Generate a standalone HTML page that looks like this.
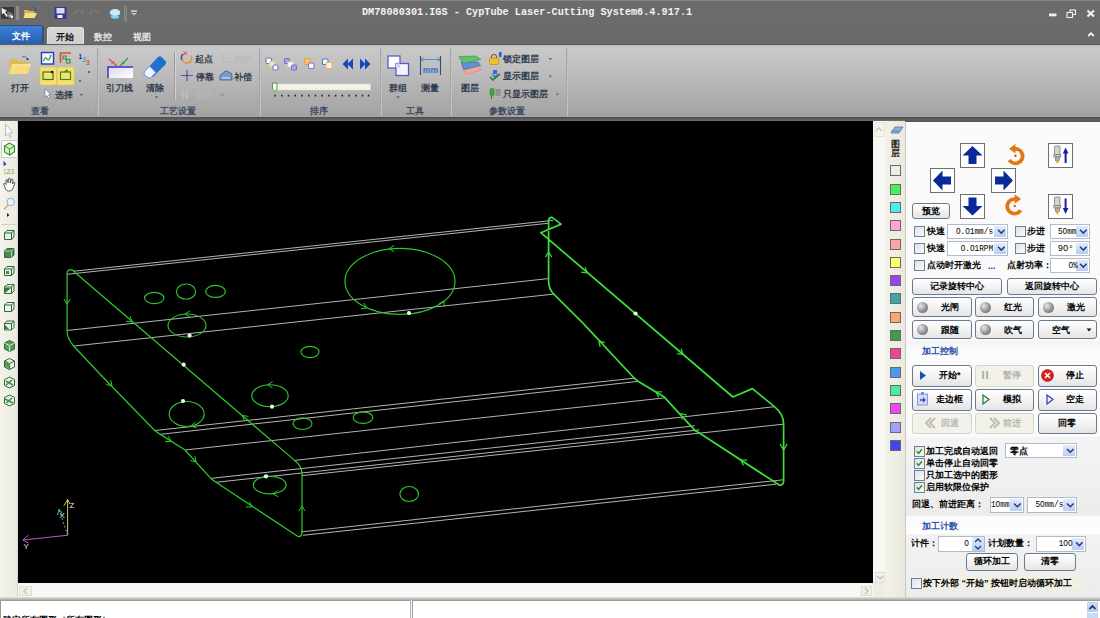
<!DOCTYPE html>
<html><head><meta charset="utf-8">
<style>
*{margin:0;padding:0;box-sizing:border-box}
html,body{width:1100px;height:618px;overflow:hidden;background:#fff;font-family:"Liberation Sans",sans-serif;font-size:9.5px;line-height:1;color:#000}
.abs{position:absolute}
.t{position:absolute;white-space:nowrap;font-size:9.1px;line-height:1;font-weight:bold}
.m{font-family:"Liberation Mono",monospace}
#title{left:0;top:0;width:1100px;height:26px;background:#6b6b6b;border-top:1px solid #858585}
#tabs{left:0;top:26px;width:1100px;height:19px;background:#6a6a6a}
#ribbon{left:0;top:44px;width:1100px;height:74px;background:linear-gradient(#bdbdbd 0,#c9c9c9 3px,#bcbcbc 40%,#acacac 75%,#a2a2a2 100%);border-top:1px solid #5e5e5e}
#rbline{left:0;top:117px;width:1100px;height:4px;background:linear-gradient(#4e4e4e,#5a5a5a 50%,#707070)}
.sep{position:absolute;top:48px;width:2px;height:68px;background:linear-gradient(90deg,#989898,#d0d0d0)}
.rl{color:#2f3b4c}
.gl{color:#3a4a60}
#lefttb{left:0;top:121px;width:18px;height:476px;background:linear-gradient(90deg,#f4f3ec,#ecebe0);border-right:1px solid #d8d7cc}
#canvas{left:18px;top:121px;width:855px;height:462px;background:#000}
#vscroll{left:873px;top:121px;width:12px;height:462px;background:#f7f7f3}
#palette{left:885px;top:121px;width:20px;height:476px;background:linear-gradient(90deg,#f2f1ea,#ebe9dc)}
#panel{left:905px;top:121px;width:195px;height:476px;background:#fafafa;border-left:1px solid #c8c8c8}
#hscroll{left:18px;top:583px;width:867px;height:14px;background:#f7f7f3}
#bottom{left:0;top:597px;width:1100px;height:21px;background:#f4f3ee}
.sw{position:absolute;left:890px;width:11px;height:11px;border:1px solid #6a6a6a}
.btn{position:absolute;border:1px solid #6a7b90;border-radius:3px;background:linear-gradient(#ffffff,#f3f3f3 50%,#e4e4e4)}
.btn.dis{border-color:#d4d4cc;background:#f2f1ea}
.cb{position:absolute;width:11px;height:11px;border:1px solid #6a7f98;background:linear-gradient(135deg,#dde1e6,#fbfbfb)}
.combo{position:absolute;border:1px solid #b0bccb;background:#fff}
.dd{position:absolute;right:1px;top:1px;bottom:1px;width:12px;background:linear-gradient(#e2ebfb,#b9cdf3)}
.ball{position:absolute;width:11px;height:11px;border-radius:50%;background:radial-gradient(circle at 35% 35%,#e8e8e8,#8a8a8a 60%,#5a5a5a)}
.arbox{position:absolute;width:25px;height:25px;border:1px solid #6e6e6e;background:#fff}
.hdr{color:#2a54b0}
</style></head><body>
<!-- TITLE BAR -->
<div id="title" class="abs"></div>
<svg class="abs" style="left:0;top:0" width="145" height="26" viewBox="0 0 145 26">
 <!-- app icon -->
 <rect x="1" y="7" width="13" height="12" fill="#3a3a3a"/>
 <path d="M1.5,8 L7,10.5 L5,12 L8,16 L6.5,17 L3.8,13 L2,14.5 Z" fill="#eeeeee"/>
 <path d="M7,12 Q10,11 13,14 L13,18 L8,18 Z" fill="#777"/>
 <path d="M9,15 L13.5,16 L12,19 Z" fill="#fff"/>
 <!-- separator -->
 <rect x="16.5" y="6" width="2" height="14" rx="1" fill="#888" stroke="#9a9a9a" stroke-width="0.6"/>
 <!-- folder -->
 <path d="M24,10 L28,10 L29,11 L34,11 L34,17.5 L24.5,17.5 Z" fill="#d6b64a"/>
 <path d="M25.5,13 L37,13 L34.5,18 L23.5,18 Z" fill="#f4e07a"/>
 <path d="M31,8.5 Q33,6.5 35,8" fill="none" stroke="#4a5aa8" stroke-width="1.2"/>
 <circle cx="35.5" cy="9.5" r="1" fill="#3a3a8a"/>
 <!-- save -->
 <rect x="54.5" y="7" width="12" height="12" fill="#3a3a92"/>
 <rect x="56.5" y="8" width="8" height="5.5" fill="#d8dcf4"/>
 <rect x="57.5" y="15" width="5" height="3" fill="#f0f0f0"/>
 <!-- undo redo faint -->
 <path d="M74,14 Q77,9 82,12 L83,15" fill="none" stroke="#7e7e7e" stroke-width="1.4"/>
 <path d="M99,14 Q96,9 91,12 L90,15" fill="none" stroke="#7c7c7c" stroke-width="1.4"/>
 <!-- blue disc -->
 <ellipse cx="115" cy="15.5" rx="5.5" ry="3.2" fill="#2a8ad0"/>
 <ellipse cx="115" cy="12.5" rx="5.2" ry="3.6" fill="#cfe8f8"/>
 <ellipse cx="115" cy="17" rx="4" ry="1.5" fill="#7fd8f8"/>
 <!-- separator -->
 <rect x="124.5" y="6" width="2" height="16" rx="1" fill="#7a7a7a" stroke="#959595" stroke-width="0.6"/>
 <!-- customize -->
 <rect x="131" y="10.5" width="6" height="1.2" fill="#f4f4f4"/>
 <path d="M131,13 L137,13 L134,16 Z" fill="#f4f4f4"/>
 <path d="M131,13 L137,13 L134,16 Z" fill="#111" transform="translate(0,0.6) scale(1)" opacity="0.35"/>
</svg>
<div class="t m" style="left:362px;top:7.3px;font-size:10.2px;font-weight:bold;color:#f2f2f2;transform:scaleY(1.15);transform-origin:0 0">DM78080301.IGS - CypTube Laser-Cutting System6.4.917.1</div>
<svg class="abs" style="left:1040px;top:0" width="60" height="45" viewBox="0 0 60 45">
 <rect x="9" y="13.5" width="7.5" height="2.8" fill="#f0f0f0"/>
 <rect x="30" y="10" width="5.5" height="4.5" fill="none" stroke="#f0f0f0" stroke-width="1.1"/>
 <rect x="27" y="12.5" width="5.5" height="5" fill="#6b6b6b" stroke="#f0f0f0" stroke-width="1.1"/>
 <path d="M47.5,10.5 L54,16.5 M54,10.5 L47.5,16.5" stroke="#f4f4f4" stroke-width="2"/>
</svg>

<div id="tabs" class="abs"></div>
<div class="abs" style="left:0;top:25px;width:43px;height:20px;background:linear-gradient(#3f7fd0,#2f6cc0 60%,#2a5fae);border:1px solid #2a4f8a;border-left:none;border-radius:0 2px 2px 0;box-shadow:1px 1px 0 #505050"></div>
<div class="t" style="left:12px;top:32px;color:#fff">文件</div>
<div class="abs" style="left:47px;top:27px;width:37px;height:19px;background:linear-gradient(#d8d8d8,#cfcfcf);border:1px solid #e6e6e6;border-bottom:none;border-radius:3px 3px 0 0"></div>
<div class="t" style="left:55.5px;top:33px;color:#111">开始</div>
<div class="t" style="left:94px;top:33px;color:#e2e2e2">数控</div>
<div class="t" style="left:133px;top:33px;color:#e2e2e2">视图</div>
<svg class="abs" style="left:1080px;top:26px" width="20" height="18"><path d="M8.2,10 L11,7.2 L13.8,10" fill="none" stroke="#f4f4f4" stroke-width="1.8"/></svg>

<div id="ribbon" class="abs"></div>
<div id="rbline" class="abs"></div>
<div class="sep" style="left:97px"></div>
<div class="sep" style="left:259px"></div>
<div class="sep" style="left:380px"></div>
<div class="sep" style="left:450px"></div>
<div class="sep" style="left:566px"></div>
<div class="abs" style="left:174px;top:52px;width:1px;height:48px;background:#9a9a9a;box-shadow:1px 0 0 #d4d4d4"></div>
<svg class="abs" style="left:0;top:44px" width="580" height="74" viewBox="0 44 580 74">
 <!-- 打开 folder -->
 <path d="M9,60 L16,59 L18,61.5 L28,61.5 L28,73 L10,73 Z" fill="#e0b850"/>
 <path d="M12,64.5 L31,64.5 L27.5,74 L8.5,74 Z" fill="#f8dc7c"/>
 <path d="M12,64.5 L31,64.5 L30.5,65.5 L11.6,65.5 Z" fill="#fff0b8"/>
 <path d="M22,57 Q24.5,55.5 26.5,57.5" fill="none" stroke="#606c9a" stroke-width="1"/>
 <circle cx="27.5" cy="59" r="1.1" fill="#2a2a5a"/>
 <!-- wave icon -->
 <rect x="41.5" y="52.5" width="12" height="11.5" fill="#f4f4ff" stroke="#2a3ab0" stroke-width="1.4"/>
 <path d="M43.5,61 Q45,56 47,59 Q49,62 51,55" fill="none" stroke="#30a040" stroke-width="1.3"/>
 <!-- red/green icon -->
 <path d="M60.5,63 L60.5,53 L71,53" fill="none" stroke="#e04838" stroke-width="1.6"/>
 <rect x="63" y="56" width="3" height="3" fill="none" stroke="#409040" stroke-width="1.1"/>
 <rect x="66.5" y="59.5" width="3.5" height="3.5" fill="none" stroke="#409040" stroke-width="1.1"/>
 <!-- 123 -->
 <text x="78.5" y="58.5" font-size="6.3" font-weight="bold" fill="#1a1a80" font-family="Liberation Sans">1</text>
 <text x="82.5" y="61.5" font-size="6.3" font-weight="bold" fill="#40a0c0" font-family="Liberation Sans">2</text>
 <text x="86.3" y="65" font-size="6.3" font-weight="bold" fill="#e05030" font-family="Liberation Sans">3</text>
 <!-- yellow buttons -->
 <rect x="40" y="67" width="16.5" height="18" rx="1.5" fill="#f8e070" stroke="#e8c850" stroke-width="0.8"/>
 <rect x="57.5" y="67" width="16.5" height="18" rx="1.5" fill="#f8e070" stroke="#e8c850" stroke-width="0.8"/>
 <rect x="43" y="72" width="10" height="7.5" fill="none" stroke="#2f7a2a" stroke-width="1.2"/>
 <circle cx="52" cy="72" r="1.3" fill="#10107a"/>
 <rect x="60.5" y="72" width="10" height="7.5" fill="none" stroke="#2f8a2a" stroke-width="1.2"/>
 <path d="M64,72 Q66,69.5 68,71 L66.5,69.5 M68,71 L66,72" fill="none" stroke="#2f8a2a" stroke-width="1"/>
 <!-- dotted line -->
 <path d="M80,81 L89,72" stroke="#e0a070" stroke-width="1" stroke-dasharray="1.5,1"/>
 <circle cx="80" cy="81" r="1" fill="#306030"/><circle cx="89" cy="72" r="1" fill="#306030"/>
 <!-- cursor -->
 <path d="M45,89 L45,97 L47,95.5 L48.5,98.5 L50,97.5 L48.5,94.8 L51,94.5 Z" fill="#fff" stroke="#5a6a80" stroke-width="0.6"/>
 <path d="M79.6,94 L83,94 L81.3,96.2 Z" fill="#6a6a6a"/>
 <path d="M87,107 L92,107 L92,112" fill="none" stroke="#b8b8b8" stroke-width="0.8"/>
 <!-- 引刀线 -->
 <rect x="108" y="67" width="25" height="11" fill="url(#g1)"/>
 <path d="M108,78 L108,67 L133,67" fill="none" stroke="#4030c8" stroke-width="1.5"/>
 <path d="M109,59 L117,66" stroke="#d85030" stroke-width="1.1"/>
 <path d="M111.5,63.5 L114.5,61.5" stroke="#d85030" stroke-width="1"/>
 <path d="M120,66 L128,58" stroke="#30a030" stroke-width="1.2"/>
 <path d="M122,61.5 L124.5,64" stroke="#30a030" stroke-width="1"/>
 <defs>
  <linearGradient id="g1" x1="0" y1="0" x2="1" y2="1"><stop offset="0" stop-color="#d8d8f8"/><stop offset="1" stop-color="#ffffff"/></linearGradient>
 </defs>
 <!-- 清除 eraser -->
 <path d="M146,70 L158,57 Q160,55.5 162,57.5 L165.5,61 Q167,63 165,65 L153,77 Z" fill="#2070d0"/>
 <path d="M144.5,71.5 L149.5,66 L156,72.5 L151,77.5 Q149,79 147,77 L144.5,74.5 Q143.5,73 144.5,71.5 Z" fill="#f0f4ff" stroke="#4a7ac8" stroke-width="0.8"/>
 <path d="M154.6,96.3 L158.4,96.3 L156.5,98.6 Z" fill="#6a6a6a"/>
 <!-- 起点 -->
 <path d="M184,54 A5,5 0 1 0 191,55.5" fill="none" stroke="#e89030" stroke-width="1.4"/>
 <path d="M183,54 A5,5 0 0 0 182,60" fill="none" stroke="#3050c0" stroke-width="1.4"/>
 <path d="M183.5,51.5 L187,55 M187,51.5 L183.5,55" stroke="#e03030" stroke-width="0.9"/>
 <!-- 内外 disabled -->
 <path d="M223,53 L223,62 L232,62 M225,55 L230,55 M225,58 L230,58" stroke="#bababa" stroke-width="1.1" fill="none"/>
 <!-- 停靠 -->
 <path d="M187,70 L187,81 M181,75.5 L193,75.5" stroke="#4858c8" stroke-width="1.2"/>
 <circle cx="187" cy="75.5" r="1.3" fill="#e03030"/>
 <!-- 补偿 -->
 <path d="M220,80 Q219,74 223,73.5 Q225,69.5 228.5,72 Q232,72 232,76 L232,80 Z" fill="#7a9ac8" stroke="#3a5a98" stroke-width="0.8"/>
 <path d="M222,78 L230,78" stroke="#fff" stroke-width="0.8"/>
 <!-- 反向 disabled -->
 <path d="M183,92 L183,99 M181.5,93.5 L183,91.5 L184.5,93.5 M187,91 L187,98 M185.5,96.5 L187,98.5 L188.5,96.5" stroke="#c4c4c4" stroke-width="1" fill="none"/>
 <path d="M220.6,94 L224,94 L222.3,96.2 Z" fill="#8a8a8a"/>
 <!-- 排序 icons -->
 <g stroke-width="1.1">
  <rect x="266" y="58" width="5.5" height="5.5" rx="1.5" fill="#fff" stroke="#8070c8"/>
  <rect x="269.5" y="61.5" width="5.5" height="5.5" rx="1" fill="#f8e0b0" stroke="#f0c890"/>
  <rect x="273" y="65" width="5" height="5" rx="1.5" fill="#fff" stroke="#8070c8"/>
  <rect x="284.5" y="58.5" width="5" height="5" rx="1" fill="#b0a0f0" stroke="#8070c8"/>
  <rect x="288" y="62" width="5" height="5" rx="1" fill="#fff" stroke="#f0d8b0"/>
  <rect x="291.5" y="65" width="5" height="5" rx="1" fill="#b0a0f0" stroke="#8070c8"/>
  <rect x="304.5" y="58.5" width="6" height="6" rx="1" fill="#f8c070" stroke="#f0a040"/>
  <rect x="308.5" y="63" width="5.5" height="5.5" rx="1.5" fill="#fff" stroke="#8070c8"/>
  <rect x="322.5" y="59" width="5.5" height="5.5" rx="1" fill="#fff" stroke="#3a80c8"/>
  <rect x="326" y="62.5" width="6" height="6" rx="1" fill="#fff0e0" stroke="#f0b070"/>
 </g>
 <path d="M348,58.5 L342.5,64 L348,69.5 Z M353,58.5 L347.5,64 L353,69.5 Z" fill="#1848c0"/>
 <path d="M360,58.5 L365.5,64 L360,69.5 Z M365,58.5 L370.5,64 L365,69.5 Z" fill="#1848c0"/>
 <!-- slider -->
 <rect x="272.5" y="84" width="98" height="6" fill="#f4f2e8" stroke="#dcdacc" stroke-width="0.6"/>
 <path d="M272.5,83 L277,83 L277,89 L274.75,91.5 L272.5,89 Z" fill="#f8f8f8" stroke="#409840" stroke-width="0.9"/>
 <g fill="#222" transform="translate(0,-0.3)">
  <rect x="274.3" y="95" width="1.5" height="1.8"/><rect x="281.1" y="95" width="1.5" height="1.8"/><rect x="287.7" y="95" width="1.5" height="1.8"/><rect x="294.5" y="95" width="1.5" height="1.8"/><rect x="301.2" y="95" width="1.5" height="1.8"/><rect x="308.0" y="95" width="1.5" height="1.8"/><rect x="314.7" y="95" width="1.5" height="1.8"/><rect x="321.4" y="95" width="1.5" height="1.8"/><rect x="328.2" y="95" width="1.5" height="1.8"/><rect x="334.9" y="95" width="1.5" height="1.8"/><rect x="341.6" y="95" width="1.5" height="1.8"/><rect x="348.4" y="95" width="1.5" height="1.8"/><rect x="355.1" y="95" width="1.5" height="1.8"/><rect x="361.8" y="95" width="1.5" height="1.8"/><rect x="367.8" y="95" width="1.5" height="1.8"/>
 </g>
 <!-- 群组 -->
 <rect x="388" y="56" width="12" height="12" fill="#fff" stroke="#5a5ad0" stroke-width="1.3"/>
 <rect x="396" y="63.5" width="12.5" height="12" fill="#f4f4ff" stroke="#5a5ad0" stroke-width="1.3"/>
 <rect x="396" y="63.5" width="4" height="4.5" fill="#d8d0f8"/>
 <path d="M396.2,96.3 L400,96.3 L398.1,98.6 Z" fill="#6a6a6a"/>
 <!-- 测量 -->
 <path d="M420.5,56 L420.5,75 M440.5,56 L440.5,75" stroke="#404a60" stroke-width="1.1"/>
 <path d="M421,59.5 L440,59.5 M423.5,57.5 L421,59.5 L423.5,61.5 M437.5,57.5 L440,59.5 L437.5,61.5" fill="none" stroke="#3a8ad0" stroke-width="0.9"/>
 <text x="422.8" y="72.5" font-size="8.6" font-weight="bold" fill="#2a72c8" font-family="Liberation Sans">mm</text>
 <!-- 图层 icon -->
 <path d="M462,66.5 L478,66.5 L481.5,70 L465.5,74.5 Z" fill="#f0a890" stroke="#e08070" stroke-width="0.6"/>
 <path d="M461,62 L478,62 L480.5,65.5 L464,69.5 Z" fill="#6090d8" stroke="#3060b0" stroke-width="0.6"/>
 <path d="M459,56.5 L476,56 L481,59.5 L463,63.5 Z" fill="#60c070" stroke="#309040" stroke-width="0.6"/>
 <!-- lock -->
 <path d="M491.5,58 L491.5,56 Q494,52.5 496.5,56 L496.5,58" fill="none" stroke="#806020" stroke-width="1.1"/>
 <rect x="489.5" y="58" width="9" height="6.5" rx="1" fill="#f0c030" stroke="#b08010" stroke-width="0.6"/>
 <rect x="499" y="52" width="2.5" height="5" fill="#2a5ad0"/>
 <path d="M548.6,58 L552,58 L550.3,60.2 Z" fill="#6a6a6a"/>
 <!-- show layer -->
 <rect x="493" y="70" width="4" height="4" fill="#3a6ad8"/>
 <path d="M491,73 L495,76 L499,73 L495,79 Z" fill="#3a6ad8"/>
 <path d="M490,77 L493,80 L500,74" fill="none" stroke="#208030" stroke-width="1.6"/>
 <path d="M548.6,75.5 L552,75.5 L550.3,77.7 Z" fill="#6a6a6a"/>
 <!-- only show -->
 <rect x="489.5" y="88" width="5" height="8" rx="2" fill="#40a040"/>
 <rect x="495.5" y="89" width="5" height="7" fill="#909090"/>
 <path d="M491.5,96 L491.5,99" stroke="#406040" stroke-width="1"/>
 <path d="M555.6,93.5 L559,93.5 L557.3,95.7 Z" fill="#6a6a6a"/>
</svg>
<div class="t rl" style="left:10.5px;top:84px">打开</div>
<div class="t rl" style="left:55px;top:91px">选择</div>
<div class="t gl" style="left:31px;top:107px">查看</div>
<div class="t rl" style="left:106px;top:84px">引刀线</div>
<div class="t rl" style="left:146px;top:84px">清除</div>
<div class="t rl" style="left:195px;top:55px">起点</div>
<div class="t" style="left:235px;top:55px;color:#b9b9b9">内外</div>
<div class="t rl" style="left:196px;top:73px">停靠</div>
<div class="t rl" style="left:234px;top:73px">补偿</div>
<div class="t" style="left:196px;top:91px;color:#b6b6b6">反向</div>
<div class="t gl" style="left:160px;top:107px">工艺设置</div>
<div class="t gl" style="left:310px;top:107px">排序</div>
<div class="t rl" style="left:389px;top:84px">群组</div>
<div class="t rl" style="left:421px;top:84px">测量</div>
<div class="t gl" style="left:406px;top:107px">工具</div>
<div class="t rl" style="left:461px;top:84px">图层</div>
<div class="t rl" style="left:503px;top:55px">锁定图层</div>
<div class="t rl" style="left:503px;top:72px">显示图层</div>
<div class="t rl" style="left:503px;top:90px">只显示图层</div>
<div class="t gl" style="left:489px;top:107px">参数设置</div>

<!-- MAIN -->
<div id="lefttb" class="abs"></div>
<div class="abs" style="left:0.5px;top:140px;width:17px;height:17.5px;background:#fdfdfc;border:1px solid #c4cad4;border-radius:1px"></div>
<svg class="abs" style="left:0;top:121px" width="18" height="290" viewBox="0 121 18 290">
 <!-- cursor -->
 <path d="M5.5,124 L5.5,136 L8,133.5 L10,137.5 L11.5,136.8 L9.5,132.8 L13,132.5 Z" fill="#fafafa" stroke="#a8aeb8" stroke-width="0.8"/>
 <!-- cube green -->
 <path d="M9.5,143 L14.5,146 L14.5,152 L9.5,155 L4.5,152 L4.5,146 Z" fill="#d8f0c8" stroke="#3a9a30" stroke-width="1.2"/>
 <path d="M4.5,146 L9.5,149 L14.5,146 M9.5,149 L9.5,155" fill="none" stroke="#3a9a30" stroke-width="1"/>
 <!-- 123 -->
 <path d="M3.5,160.5 L3.5,166 L6.5,164.5 Z" fill="#3a3aa0"/>
 <text x="3" y="173.5" font-size="6.8" fill="#d0a040" font-family="Liberation Sans">1</text>
 <text x="6.6" y="173.5" font-size="6.8" fill="#50a050" font-family="Liberation Sans">2</text>
 <text x="10.4" y="173.5" font-size="6.8" fill="#80b050" font-family="Liberation Sans">3</text>
 <!-- hand -->
 <path d="M4.5,186 Q3,183.5 4.5,183 L6,184.5 L6,180 Q6.8,179 7.6,180 L8,183 L8.5,178.5 Q9.4,177.6 10.2,178.5 L10.4,183 L11.3,179.3 Q12.2,178.6 12.9,179.6 L12.6,184 L13.8,182.2 Q15.2,182 14.8,183.6 L12.6,189 Q11.8,191 9.8,191 L8.5,191 Q6.5,191 5.5,189 Z" fill="#fbfbfb" stroke="#383838" stroke-width="0.8"/>
 <!-- magnifier -->
 <circle cx="10.8" cy="202" r="3.8" fill="#e4f0fa" stroke="#90b0d0" stroke-width="1"/>
 <path d="M8,205 L4,209.5" stroke="#e0b070" stroke-width="1.8"/>
 <path d="M7,213 L7,217 L9.5,215 Z" fill="#222"/>
 <rect x="1" y="224" width="16" height="1" fill="#cfcfc4"/>
 <!-- cube views -->
 <g stroke="#2f6a38" stroke-width="1">
  <path d="M4.5,233 L7,230.5 L14,230.5 L14,237 L11.5,239.5 L4.5,239.5 Z" fill="#e8f2e4"/><path d="M4.5,233 L11.5,233 L14,230.5 M11.5,233 L11.5,239.5" fill="none"/>
  <path d="M4.5,251 L7,248.5 L14,248.5 L14,255 L11.5,257.5 L4.5,257.5 Z" fill="#4a8a50"/><path d="M4.5,251 L11.5,251 L14,248.5 M11.5,251 L11.5,257.5" fill="none" stroke="#a8d0a8"/>
  <path d="M4.5,269 L7,266.5 L14,266.5 L14,273 L11.5,275.5 L4.5,275.5 Z" fill="#e8f2e4"/><path d="M4.5,269 L11.5,269 L14,266.5 M11.5,269 L11.5,275.5" fill="none"/><rect x="6" y="271" width="3" height="3" fill="#4a8a50" stroke="none"/>
  <path d="M4.5,287 L7,284.5 L14,284.5 L14,291 L11.5,293.5 L4.5,293.5 Z" fill="#e8f2e4"/><path d="M4.5,287 L11.5,287 L14,284.5 M11.5,287 L11.5,293.5" fill="none"/><path d="M5,293 L5,288 L11,288 Z" fill="#3a7a40" stroke="none"/>
  <path d="M4.5,305 L7,302.5 L14,302.5 L14,309 L11.5,311.5 L4.5,311.5 Z" fill="#f0f6ee"/><path d="M4.5,305 L11.5,305 L14,302.5 M11.5,305 L11.5,311.5" fill="none"/>
  <path d="M4.5,323.5 L7,321 L14,321 L14,327.5 L11.5,330 L4.5,330 Z" fill="#e8f2e4"/><path d="M4.5,323.5 L11.5,323.5 L14,321 M11.5,323.5 L11.5,330" fill="none"/><path d="M5,329 L5,325 L9,329 Z" fill="#3a7a40" stroke="none"/>
  <path d="M9.5,340.5 L14.5,343 L14.5,349 L9.5,351.5 L4.5,349 L4.5,343 Z" fill="#5a9a58"/><path d="M4.5,343 L9.5,345.5 L14.5,343 M9.5,345.5 L9.5,351.5" fill="none" stroke="#d8ecd8"/>
  <path d="M9.5,358.5 L14.5,361 L14.5,367 L9.5,369.5 L4.5,367 L4.5,361 Z" fill="#e8f2e4"/><path d="M4.5,361 L9.5,363.5 L14.5,361 M9.5,363.5 L9.5,369.5" fill="none"/><path d="M5,361.5 L9.5,364 L9.5,369 L5,366.5 Z" fill="#5a9a58" stroke="none"/>
  <path d="M9.5,377 L14.5,379.5 L14.5,385.5 L9.5,388 L4.5,385.5 L4.5,379.5 Z" fill="#e8f2e4"/><path d="M6,381 L13,385 M6,385 L12,380" fill="none" stroke="#4a8a50" stroke-width="1.6"/>
  <path d="M9.5,395 L14.5,397.5 L14.5,403.5 L9.5,406 L4.5,403.5 L4.5,397.5 Z" fill="#e8f2e4"/><path d="M6.5,403 L12,398 M5,399 L13,403" fill="none" stroke="#4a8a50" stroke-width="1.6"/>
 </g>
</svg>

<div id="canvas" class="abs" style="overflow:hidden"><div class="abs" style="left:-18px;top:-121px"><svg class="abs" style="left:0;top:0" width="1100" height="618" viewBox="0 0 1100 618"><g><line x1="73.0" y1="271.3" x2="553.0" y2="220.4" stroke="#b4b4b4" stroke-width="1"/>
<line x1="67.0" y1="274.3" x2="549.0" y2="223.2" stroke="#b4b4b4" stroke-width="1"/>
<line x1="67.0" y1="330.5" x2="548.4" y2="278.6" stroke="#b4b4b4" stroke-width="1"/>
<line x1="74.0" y1="346.0" x2="553.8" y2="294.1" stroke="#b4b4b4" stroke-width="1"/>
<line x1="155.2" y1="430.5" x2="634.0" y2="378.2" stroke="#b4b4b4" stroke-width="1"/>
<line x1="159.7" y1="434.4" x2="638.0" y2="381.4" stroke="#b4b4b4" stroke-width="1"/>
<line x1="185.0" y1="450.0" x2="663.8" y2="398.0" stroke="#b4b4b4" stroke-width="1"/>
<line x1="294.6" y1="460.4" x2="774.4" y2="406.7" stroke="#b4b4b4" stroke-width="1"/>
<line x1="210.8" y1="478.4" x2="694.9" y2="425.8" stroke="#b4b4b4" stroke-width="1"/>
<line x1="216.0" y1="482.3" x2="699.4" y2="429.8" stroke="#b4b4b4" stroke-width="1"/>
<line x1="302.0" y1="475.6" x2="783.4" y2="424.2" stroke="#b4b4b4" stroke-width="1"/>
<line x1="301.0" y1="531.9" x2="783.0" y2="479.8" stroke="#b4b4b4" stroke-width="1"/>
<line x1="303.0" y1="535.3" x2="776.0" y2="484.2" stroke="#b4b4b4" stroke-width="1"/>
<path d="M75,272.5 L294.6,460.4 Q302,466 302,474 L302,533.5 Q301,537 298,536.5 L216,482.3 L210.8,478.4 L185,450 L160.4,434.4 L155.2,431 L100.6,374.7 L73.6,346 Q67.1,338 67.1,332 L67.1,273 Q67.5,269.6 70.5,269.6 Q73.5,269.6 75,272.5" fill="none" stroke="#2cc82c" stroke-width="1.25" stroke-linejoin="round"/>
<path d="M548.6,281 L548.6,220 Q549.5,217.2 552,217.4 L561.1,224.1 L540.8,232.7 L732.9,397 L752.4,388.6 L774.4,406.7 Q783.4,414 783.6,423.5 L783.6,481.7 Q783,485.5 779.6,485.3 L699.4,433 L694.9,430.4 L663.8,396.7 L638,381.2 L634.1,378 L583.9,324.2 L553.8,294.1 Q548.6,289 548.6,281" fill="none" stroke="#3ce03c" stroke-width="1.7" stroke-linejoin="round"/>
<ellipse cx="154.3" cy="298" rx="9.7" ry="5.7" fill="none" stroke="#2ec42e" stroke-width="1.15"/>
<ellipse cx="186" cy="291.6" rx="9.6" ry="7.6" fill="none" stroke="#2ec42e" stroke-width="1.15"/>
<ellipse cx="215.5" cy="291.4" rx="9.8" ry="6" fill="none" stroke="#2ec42e" stroke-width="1.15"/>
<ellipse cx="187" cy="325.5" rx="19" ry="11.5" fill="none" stroke="#2ec42e" stroke-width="1.15"/>
<ellipse cx="400" cy="281.4" rx="55" ry="33" fill="none" stroke="#2ec42e" stroke-width="1.15"/>
<ellipse cx="310" cy="352" rx="9" ry="5.6" fill="none" stroke="#2ec42e" stroke-width="1.15"/>
<ellipse cx="270" cy="395.7" rx="18.2" ry="11" fill="none" stroke="#2ec42e" stroke-width="1.15"/>
<ellipse cx="186.7" cy="414" rx="17.5" ry="12.5" fill="none" stroke="#2ec42e" stroke-width="1.15"/>
<ellipse cx="302.5" cy="423.7" rx="9.5" ry="5.8" fill="none" stroke="#2ec42e" stroke-width="1.15"/>
<ellipse cx="363" cy="417.6" rx="9.8" ry="5.8" fill="none" stroke="#2ec42e" stroke-width="1.15"/>
<ellipse cx="269.7" cy="485" rx="16.4" ry="8.9" fill="none" stroke="#2ec42e" stroke-width="1.15"/>
<ellipse cx="409.2" cy="494" rx="9.3" ry="7.5" fill="none" stroke="#2ec42e" stroke-width="1.15"/>
<circle cx="409" cy="313" r="2.1" fill="#f2f2f2"/>
<circle cx="189.6" cy="335.6" r="2.1" fill="#f2f2f2"/>
<circle cx="183.7" cy="364.7" r="2.1" fill="#f2f2f2"/>
<circle cx="272" cy="406.7" r="2.1" fill="#f2f2f2"/>
<circle cx="183" cy="401" r="2.1" fill="#f2f2f2"/>
<circle cx="266" cy="476.3" r="2.1" fill="#f2f2f2"/>
<circle cx="635.5" cy="313.5" r="2.1" fill="#f2f2f2"/>
<line x1="67.1" y1="304" x2="70.3" y2="298.9" stroke="#2cc82c" stroke-width="1"/>
<line x1="67.1" y1="304" x2="63.9" y2="298.9" stroke="#2cc82c" stroke-width="1"/>
<line x1="302" y1="506" x2="298.8" y2="511.1" stroke="#2cc82c" stroke-width="1"/>
<line x1="302" y1="506" x2="305.2" y2="511.1" stroke="#2cc82c" stroke-width="1"/>
<line x1="132" y1="322" x2="130.2" y2="316.3" stroke="#2cc82c" stroke-width="1"/>
<line x1="132" y1="322" x2="126.1" y2="321.1" stroke="#2cc82c" stroke-width="1"/>
<line x1="242.5" y1="415.5" x2="244.3" y2="421.2" stroke="#2cc82c" stroke-width="1"/>
<line x1="242.5" y1="415.5" x2="248.4" y2="416.4" stroke="#2cc82c" stroke-width="1"/>
<line x1="112" y1="386" x2="110.8" y2="380.1" stroke="#2cc82c" stroke-width="1"/>
<line x1="112" y1="386" x2="106.2" y2="384.5" stroke="#2cc82c" stroke-width="1"/>
<line x1="171" y1="441.5" x2="168.4" y2="436.1" stroke="#2cc82c" stroke-width="1"/>
<line x1="171" y1="441.5" x2="165.0" y2="441.5" stroke="#2cc82c" stroke-width="1"/>
<line x1="196" y1="462" x2="194.9" y2="456.1" stroke="#2cc82c" stroke-width="1"/>
<line x1="196" y1="462" x2="190.2" y2="460.4" stroke="#2cc82c" stroke-width="1"/>
<line x1="252" y1="507" x2="249.4" y2="501.6" stroke="#2cc82c" stroke-width="1"/>
<line x1="252" y1="507" x2="246.0" y2="506.9" stroke="#2cc82c" stroke-width="1"/>
<line x1="548.6" y1="252" x2="545.4" y2="257.1" stroke="#3ce03c" stroke-width="1.2"/>
<line x1="548.6" y1="252" x2="551.8" y2="257.1" stroke="#3ce03c" stroke-width="1.2"/>
<line x1="587" y1="273" x2="585.2" y2="267.3" stroke="#3ce03c" stroke-width="1.2"/>
<line x1="587" y1="273" x2="581.1" y2="272.1" stroke="#3ce03c" stroke-width="1.2"/>
<line x1="683" y1="354.5" x2="681.2" y2="348.8" stroke="#3ce03c" stroke-width="1.2"/>
<line x1="683" y1="354.5" x2="677.1" y2="353.6" stroke="#3ce03c" stroke-width="1.2"/>
<line x1="599" y1="341" x2="600.1" y2="346.9" stroke="#3ce03c" stroke-width="1.2"/>
<line x1="599" y1="341" x2="604.8" y2="342.6" stroke="#3ce03c" stroke-width="1.2"/>
<line x1="656" y1="392" x2="658.7" y2="397.3" stroke="#3ce03c" stroke-width="1.2"/>
<line x1="656" y1="392" x2="662.0" y2="391.9" stroke="#3ce03c" stroke-width="1.2"/>
<line x1="681" y1="413.5" x2="682.1" y2="419.4" stroke="#3ce03c" stroke-width="1.2"/>
<line x1="681" y1="413.5" x2="686.8" y2="415.1" stroke="#3ce03c" stroke-width="1.2"/>
<line x1="741" y1="460" x2="743.5" y2="465.4" stroke="#3ce03c" stroke-width="1.2"/>
<line x1="741" y1="460" x2="747.0" y2="460.1" stroke="#3ce03c" stroke-width="1.2"/>
<line x1="783.6" y1="450" x2="787.1" y2="443.9" stroke="#3ce03c" stroke-width="1.2"/>
<line x1="783.6" y1="450" x2="780.1" y2="443.9" stroke="#3ce03c" stroke-width="1.2"/>
<line x1="185" y1="314" x2="190.1" y2="317.2" stroke="#2cc82c" stroke-width="1"/>
<line x1="185" y1="314" x2="190.1" y2="310.8" stroke="#2cc82c" stroke-width="1"/>
<line x1="389" y1="248.6" x2="394.1" y2="251.8" stroke="#2cc82c" stroke-width="1"/>
<line x1="389" y1="248.6" x2="394.1" y2="245.4" stroke="#2cc82c" stroke-width="1"/>
<line x1="367" y1="308" x2="363.7" y2="303.0" stroke="#2cc82c" stroke-width="1"/>
<line x1="367" y1="308" x2="361.0" y2="308.7" stroke="#2cc82c" stroke-width="1"/>
<line x1="444" y1="301" x2="438.7" y2="303.8" stroke="#2cc82c" stroke-width="1"/>
<line x1="444" y1="301" x2="444.2" y2="307.0" stroke="#2cc82c" stroke-width="1"/>
<line x1="267.5" y1="384.8" x2="272.6" y2="388.0" stroke="#2cc82c" stroke-width="1"/>
<line x1="267.5" y1="384.8" x2="272.6" y2="381.6" stroke="#2cc82c" stroke-width="1"/>
<line x1="191" y1="426" x2="196.6" y2="428.2" stroke="#2cc82c" stroke-width="1"/>
<line x1="191" y1="426" x2="195.5" y2="422.0" stroke="#2cc82c" stroke-width="1"/>
<line x1="273" y1="494" x2="278.3" y2="496.7" stroke="#2cc82c" stroke-width="1"/>
<line x1="273" y1="494" x2="277.8" y2="490.4" stroke="#2cc82c" stroke-width="1"/>
<line x1="67.6" y1="535.2" x2="67.6" y2="499.5" stroke="#d8c860" stroke-width="1"/>
<polyline points="63.9,505.8 67.6,499.5 70,504" fill="none" stroke="#d8c860" stroke-width="1"/>
<line x1="67.6" y1="535.2" x2="59.2" y2="510" stroke="#40b8c8" stroke-width="1" stroke-dasharray="2,2"/>
<polyline points="57.5,515 59.2,509 62,513" fill="none" stroke="#40b8c8" stroke-width="1"/>
<line x1="67.6" y1="535.2" x2="22.9" y2="540" stroke="#c058c0" stroke-width="1.1"/>
<polyline points="28.5,535 22.9,540 28.5,543" fill="none" stroke="#c058c0" stroke-width="1"/>
<text x="69.5" y="508" fill="#e8e8e8" font-size="8" font-family="Liberation Sans">Z</text>
<text x="59.5" y="518" fill="#e0e0e0" font-size="8" font-family="Liberation Sans">X</text>
<text x="23.5" y="549" fill="#e0e0e0" font-size="8" font-family="Liberation Sans">Y</text></g></svg></div></div>
<div id="vscroll" class="abs"></div>
<div id="hscroll" class="abs"></div>
<div class="abs" style="left:873px;top:583px;width:12px;height:14px;background:#eeede4"></div>
<div class="abs" style="left:873.5px;top:122px;width:11px;height:15px;background:#f4f3ec;border:1px solid #e6e5dc"></div>
<div class="abs" style="left:875px;top:572px;width:10px;height:11px;background:#f1f0e8;border:1px solid #e0dfd4"></div>
<div class="abs" style="left:18.5px;top:585.5px;width:13px;height:10.5px;background:#f1f0e8;border:1px solid #e0dfd4"></div>
<div class="abs" style="left:861px;top:586px;width:11px;height:10px;background:#f1f0e8;border:1px solid #e0dfd4"></div>
<svg class="abs" style="left:0;top:0" width="1100" height="618">
 <path d="M876,131 L879,128 L882,131" fill="none" stroke="#c6c6c0" stroke-width="1.3"/>
 <path d="M877,576 L880,579 L883,576" fill="none" stroke="#c0c0b8" stroke-width="1.3"/>
 <path d="M27,588 L24,591 L27,594" fill="none" stroke="#c0c0b8" stroke-width="1.3"/>
 <path d="M865,588 L868,591 L865,594" fill="none" stroke="#c0c0b8" stroke-width="1.3"/>
</svg>

<div id="palette" class="abs"></div>
<svg class="abs" style="left:885px;top:121px" width="20" height="40" viewBox="885 121 20 40"><path d="M891,133 L895,127 L903,127 L899,133 Z" fill="#8ab0e0" stroke="#4a78b8" stroke-width="0.8"/><path d="M891,131 L899,131" stroke="#3a68a8" stroke-width="0.6"/></svg>
<div class="t" style="left:890.5px;top:140px;font-size:8.6px;line-height:8.8px;width:9px;white-space:normal;font-weight:bold;color:#1a1a1a">图层</div>
<div class="sw" style="top:165.3px;background:#ececea"></div>
<div class="sw" style="top:183.6px;background:#4af055"></div>
<div class="sw" style="top:201.9px;background:#48eeee"></div>
<div class="sw" style="top:220.2px;background:#ffa4d4"></div>
<div class="sw" style="top:238.5px;background:#ffa4a4"></div>
<div class="sw" style="top:256.8px;background:#ffff6a"></div>
<div class="sw" style="top:275.1px;background:#9944ee"></div>
<div class="sw" style="top:293.4px;background:#40a4a4"></div>
<div class="sw" style="top:311.7px;background:#ffa474"></div>
<div class="sw" style="top:330.0px;background:#409a48"></div>
<div class="sw" style="top:348.3px;background:#ee4498"></div>
<div class="sw" style="top:366.6px;background:#4898ee"></div>
<div class="sw" style="top:384.9px;background:#48ee9c"></div>
<div class="sw" style="top:403.2px;background:#ee48ee"></div>
<div class="sw" style="top:421.5px;background:#a0a0ff"></div>
<div class="sw" style="top:439.8px;background:#4444ee"></div>
<div id="panel" class="abs"></div>
<div class="abs" style="left:905px;top:120px;width:195px;height:2px;background:#5a5a5a"></div>
<div class="arbox" style="left:960px;top:143px"></div>
<svg class="abs" style="left:960px;top:143px" width="25" height="25"><path d="M12.5,3 L22.5,12.5 L16.5,12.5 L16.5,21 L8.5,21 L8.5,12.5 L2.5,12.5 Z" fill="#0a2a98"/></svg>
<div class="arbox" style="left:930px;top:168px"></div>
<svg class="abs" style="left:930px;top:168px" width="25" height="25"><path d="M3,12.5 L12.5,2.5 L12.5,8.5 L21,8.5 L21,16.5 L12.5,16.5 L12.5,22.5 Z" fill="#0a2a98"/></svg>
<div class="arbox" style="left:991px;top:168px"></div>
<svg class="abs" style="left:991px;top:168px" width="25" height="25"><path d="M22,12.5 L12.5,2.5 L12.5,8.5 L4,8.5 L4,16.5 L12.5,16.5 L12.5,22.5 Z" fill="#0a2a98"/></svg>
<div class="arbox" style="left:960px;top:193.5px"></div>
<svg class="abs" style="left:960px;top:193.5px" width="25" height="25"><path d="M12.5,21.5 L22.5,12 L16.5,12 L16.5,3.5 L8.5,3.5 L8.5,12 L2.5,12 Z" fill="#0a2a98"/></svg>
<svg class="abs" style="left:1004px;top:142px" width="26" height="78" viewBox="0 0 26 78"><path d="M10.8,6.9 A7.2,7.2 0 1 1 5.3,18" fill="none" stroke="#e07818" stroke-width="3.9"/><path d="M5,6.8 L11.5,2 L11.5,11.6 Z" fill="#e07818"/><circle cx="11.4" cy="13.7" r="1.2" fill="#c86010"/><path d="M11.3,57.2 A7.2,7.2 0 1 0 16.6,68.2" fill="none" stroke="#e07818" stroke-width="3.9"/><path d="M17.2,57 L10.7,52.2 L10.7,61.8 Z" fill="#e07818"/><circle cx="10.7" cy="64" r="1.2" fill="#c86010"/></svg>
<div class="arbox" style="left:1048px;top:143px"></div>
<svg class="abs" style="left:1048px;top:143px" width="25" height="25"><rect x="6.5" y="3" width="5.5" height="8.5" rx="0.8" fill="#d4d4d4" stroke="#6a6a6a" stroke-width="0.7"/><rect x="5.8" y="11.5" width="7" height="2.5" fill="#c8c8c8" stroke="#6a6a6a" stroke-width="0.6"/><rect x="7.3" y="14" width="4" height="3.5" fill="#b0b0b0" stroke="#6a6a6a" stroke-width="0.6"/><path d="M7.3,17.5 L11.3,17.5 L9.3,21 Z" fill="#e0b020"/><path d="M17.6,9 L17.6,20" stroke="#1a1aa8" stroke-width="2"/><path d="M14.8,10.5 L17.6,4.5 L20.4,10.5 Z" fill="#1a1aa8"/></svg>
<div class="arbox" style="left:1048px;top:194px"></div>
<svg class="abs" style="left:1048px;top:194px" width="25" height="25"><rect x="6.5" y="3" width="5.5" height="8.5" rx="0.8" fill="#d4d4d4" stroke="#6a6a6a" stroke-width="0.7"/><rect x="5.8" y="11.5" width="7" height="2.5" fill="#c8c8c8" stroke="#6a6a6a" stroke-width="0.6"/><rect x="7.3" y="14" width="4" height="3.5" fill="#b0b0b0" stroke="#6a6a6a" stroke-width="0.6"/><path d="M7.3,17.5 L11.3,17.5 L9.3,21 Z" fill="#e0b020"/><path d="M17.6,4.5 L17.6,15.5" stroke="#1a1aa8" stroke-width="2"/><path d="M14.8,14 L17.6,20 L20.4,14 Z" fill="#1a1aa8"/></svg>
<div class="btn " style="left:912px;top:203px;width:38px;height:15.5px"></div>
<div class="t" style="left:922px;top:206.5px;">预览</div>
<div class="cb" style="left:914px;top:226px"></div>
<div class="t" style="left:926.5px;top:227px;">快速</div>
<div class="combo" style="left:946.5px;top:224px;width:61.5px;height:14.5px"><div class="dd"></div></div>
<svg class="abs" style="left:995px;top:224px" width="13" height="14.5"><path d="M3,5.8 L6.3,9.1 L9.6,5.8" fill="none" stroke="#2a3a78" stroke-width="1.5"/></svg>
<div class="t m" style="right:106.5px;top:226.8px;font-size:9.8px;font-weight:normal;color:#000;transform:scaleX(0.79);transform-origin:100% 0">O.O1mm/s</div>
<div class="cb" style="left:1015px;top:226px"></div>
<div class="t" style="left:1027px;top:227px;">步进</div>
<div class="combo" style="left:1050px;top:224px;width:40px;height:14.5px"><div class="dd"></div></div>
<svg class="abs" style="left:1077px;top:224px" width="13" height="14.5"><path d="M3,5.8 L6.3,9.1 L9.6,5.8" fill="none" stroke="#2a3a78" stroke-width="1.5"/></svg>
<div class="t m" style="right:23.5px;top:226.8px;font-size:9.8px;font-weight:normal;color:#000;transform:scaleX(0.79);transform-origin:100% 0">5Omm</div>
<div class="cb" style="left:914px;top:243px"></div>
<div class="t" style="left:926.5px;top:244px;">快速</div>
<div class="combo" style="left:946.5px;top:241px;width:61.5px;height:14.5px"><div class="dd"></div></div>
<svg class="abs" style="left:995px;top:241px" width="13" height="14.5"><path d="M3,5.8 L6.3,9.1 L9.6,5.8" fill="none" stroke="#2a3a78" stroke-width="1.5"/></svg>
<div class="t m" style="right:106.5px;top:243.8px;font-size:9.8px;font-weight:normal;color:#000;transform:scaleX(0.79);transform-origin:100% 0">O.O1RPM</div>
<div class="cb" style="left:1015px;top:243px"></div>
<div class="t" style="left:1027px;top:244px;">步进</div>
<div class="combo" style="left:1050px;top:241px;width:40px;height:14.5px"><div class="dd"></div></div>
<svg class="abs" style="left:1077px;top:241px" width="13" height="14.5"><path d="M3,5.8 L6.3,9.1 L9.6,5.8" fill="none" stroke="#2a3a78" stroke-width="1.5"/></svg>
<div class="t m" style="right:26.0px;top:243.8px;font-size:9.8px;font-weight:normal;color:#000;transform:scaleX(0.9);transform-origin:100% 0">9O°</div>
<div class="cb" style="left:914px;top:260px"></div>
<div class="t" style="left:926.5px;top:261px;">点动时开激光</div>
<div class="t" style="left:988px;top:262px;color:#1a2aa0;font-weight:bold;font-size:9px;font-family:'Liberation Sans'">...</div>
<div class="t" style="left:1007px;top:261px;">点射功率：</div>
<div class="combo" style="left:1050px;top:258px;width:40px;height:14.5px"><div class="dd"></div></div>
<svg class="abs" style="left:1077px;top:258px" width="13" height="14.5"><path d="M3,5.8 L6.3,9.1 L9.6,5.8" fill="none" stroke="#2a3a78" stroke-width="1.5"/></svg>
<div class="t m" style="right:22.5px;top:260.8px;font-size:9.8px;font-weight:normal;color:#000;transform:scaleX(0.79);transform-origin:100% 0">O%</div>
<div class="btn " style="left:912px;top:278px;width:90px;height:17px"></div>
<div class="t" style="left:930px;top:282px;">记录旋转中心</div>
<div class="btn " style="left:1007px;top:278px;width:90px;height:17px"></div>
<div class="t" style="left:1025px;top:282px;">返回旋转中心</div>
<div class="btn " style="left:912px;top:297px;width:60px;height:20px"></div>
<div class="ball" style="left:917px;top:301.5px"></div>
<div class="t" style="left:941px;top:303px;">光闸</div>
<div class="btn " style="left:975px;top:297px;width:59px;height:20px"></div>
<div class="ball" style="left:980px;top:301.5px"></div>
<div class="t" style="left:1004px;top:303px;">红光</div>
<div class="btn " style="left:1037.5px;top:297px;width:59.5px;height:20px"></div>
<div class="ball" style="left:1042.5px;top:301.5px"></div>
<div class="t" style="left:1066.5px;top:303px;">激光</div>
<div class="btn " style="left:912px;top:319.5px;width:60px;height:19.5px"></div>
<div class="ball" style="left:917px;top:324px"></div>
<div class="t" style="left:941px;top:325.5px;">跟随</div>
<div class="btn " style="left:975px;top:319.5px;width:59px;height:19.5px"></div>
<div class="ball" style="left:980px;top:324px"></div>
<div class="t" style="left:1004px;top:325.5px;">吹气</div>
<div class="btn " style="left:1037.5px;top:319.5px;width:59.5px;height:19.5px"></div>
<div class="t" style="left:1051.5px;top:325.5px;">空气</div>
<svg class="abs" style="left:1085px;top:327px" width="8" height="6"><path d="M1.5,1.5 L6.5,1.5 L4,4.5 Z" fill="#111"/></svg>
<div class="abs" style="left:906px;top:341px;width:194px;height:20px;background:linear-gradient(#f2f2f2,#fbfbfb 40%,#fdfdfd)"></div>
<div class="t" style="left:922px;top:347px;color:#2a50a8">加工控制</div>
<div class="btn " style="left:912px;top:365px;width:60px;height:22px"></div>
<svg class="abs" style="left:919px;top:370px" width="8" height="11"><path d="M1,1 L7,5.5 L1,10 Z" fill="#1850c0"/></svg>
<div class="t" style="left:939px;top:371px;">开始*</div>
<div class="btn dis" style="left:975px;top:365px;width:59px;height:22px"></div>
<svg class="abs" style="left:981px;top:370px" width="8" height="11"><rect x="1" y="1" width="2.2" height="8" fill="#b8b8b0"/><rect x="5" y="1" width="2.2" height="8" fill="#b8b8b0"/></svg>
<div class="t" style="left:1003px;top:371px;color:#b4b4ac">暂停</div>
<div class="btn " style="left:1037.5px;top:365px;width:59.5px;height:22px"></div>
<svg class="abs" style="left:1041px;top:369px" width="14" height="14"><circle cx="6.5" cy="6.5" r="6" fill="#d82020" stroke="#a01010" stroke-width="0.6"/><path d="M4,4 L9,9 M9,4 L4,9" stroke="#fff" stroke-width="1.6"/></svg>
<div class="t" style="left:1066px;top:371px;">停止</div>
<div class="btn " style="left:912px;top:389px;width:60px;height:21.5px"></div>
<svg class="abs" style="left:916px;top:391px" width="14" height="16"><rect x="1.5" y="3" width="10" height="11" fill="#d8d8f8" stroke="#8080c8" stroke-width="0.8"/><path d="M4,9 L9,9 M7,7 L9,9 L7,11" fill="none" stroke="#3050c0" stroke-width="1.3"/><rect x="5" y="1" width="3" height="3" fill="#60a0e0"/></svg>
<div class="t" style="left:936px;top:395px;">走边框</div>
<div class="btn " style="left:975px;top:389px;width:59px;height:21.5px"></div>
<svg class="abs" style="left:982px;top:394px" width="8" height="11"><path d="M1,1 L7,5.5 L1,10 Z" fill="none" stroke="#207830" stroke-width="1.2"/></svg>
<div class="t" style="left:1003px;top:395px;">模拟</div>
<div class="btn " style="left:1037.5px;top:389px;width:59.5px;height:21.5px"></div>
<svg class="abs" style="left:1046px;top:394px" width="8" height="11"><path d="M1,1 L7,5.5 L1,10 Z" fill="none" stroke="#2040c0" stroke-width="1.2"/></svg>
<div class="t" style="left:1066px;top:395px;">空走</div>
<div class="btn dis" style="left:912px;top:413px;width:60px;height:21px"></div>
<svg class="abs" style="left:925px;top:417px" width="12" height="12"><path d="M6,1 L1,6 L6,11 M10,1 L5,6 L10,11" fill="none" stroke="#c0c0b8" stroke-width="2"/></svg>
<div class="t" style="left:941px;top:419px;color:#b8b8b0">回退</div>
<div class="btn dis" style="left:975px;top:413px;width:59px;height:21px"></div>
<svg class="abs" style="left:988px;top:417px" width="12" height="12"><path d="M2,1 L7,6 L2,11 M6,1 L11,6 L6,11" fill="none" stroke="#c0c0b8" stroke-width="2"/></svg>
<div class="t" style="left:1003px;top:419px;color:#b8b8b0">前进</div>
<div class="btn " style="left:1037.5px;top:413px;width:59.5px;height:21px"></div>
<div class="t" style="left:1058px;top:419px;">回零</div>
<div class="abs" style="left:906px;top:437px;width:194px;height:79px;background:linear-gradient(#f4f4f4,#ececec)"></div>
<div class="cb" style="left:914px;top:446px"></div>
<svg class="abs" style="left:914px;top:446px" width="11" height="11"><path d="M2.8,5.3 L4.6,7.4 L8,3.2" fill="none" stroke="#1c961c" stroke-width="1.5"/></svg>
<div class="t" style="left:926px;top:447px;">加工完成自动返回</div>
<div class="combo" style="left:1004.5px;top:443px;width:72.5px;height:15px"><div class="dd"></div></div>
<svg class="abs" style="left:1064px;top:443px" width="13" height="15"><path d="M3,6.0 L6.3,9.3 L9.6,6.0" fill="none" stroke="#2a3a78" stroke-width="1.5"/></svg>
<div class="t" style="left:1010px;top:447px;">零点</div>
<div class="cb" style="left:914px;top:457.5px"></div>
<svg class="abs" style="left:914px;top:457.5px" width="11" height="11"><path d="M2.8,5.3 L4.6,7.4 L8,3.2" fill="none" stroke="#1c961c" stroke-width="1.5"/></svg>
<div class="t" style="left:926px;top:458.5px;">单击停止自动回零</div>
<div class="cb" style="left:914px;top:469.5px"></div>
<div class="t" style="left:926px;top:470.5px;">只加工选中的图形</div>
<div class="cb" style="left:914px;top:481.5px"></div>
<svg class="abs" style="left:914px;top:481.5px" width="11" height="11"><path d="M2.8,5.3 L4.6,7.4 L8,3.2" fill="none" stroke="#1c961c" stroke-width="1.5"/></svg>
<div class="t" style="left:926px;top:482.5px;">启用软限位保护</div>
<div class="t" style="left:912px;top:500px;">回退、前进距离：</div>
<div class="combo" style="left:989.5px;top:497px;width:34.5px;height:16px"><div class="dd"></div></div>
<svg class="abs" style="left:1011px;top:497px" width="13" height="16"><path d="M3,6.5 L6.3,9.8 L9.6,6.5" fill="none" stroke="#2a3a78" stroke-width="1.5"/></svg>
<div class="t m" style="right:90.0px;top:500.3px;font-size:9.8px;font-weight:normal;color:#000;transform:scaleX(0.79);transform-origin:100% 0">1Omm</div>
<div class="combo" style="left:1027px;top:497px;width:50px;height:16px"><div class="dd"></div></div>
<svg class="abs" style="left:1064px;top:497px" width="13" height="16"><path d="M3,6.5 L6.3,9.8 L9.6,6.5" fill="none" stroke="#2a3a78" stroke-width="1.5"/></svg>
<div class="t m" style="right:37.0px;top:500.3px;font-size:9.8px;font-weight:normal;color:#000;transform:scaleX(0.79);transform-origin:100% 0">5Omm/s</div>
<div class="abs" style="left:906px;top:516px;width:194px;height:18px;background:linear-gradient(#fbfbfb,#fefefe)"></div>
<div class="t" style="left:922px;top:522px;color:#2a50a8">加工计数</div>
<div class="abs" style="left:906px;top:534px;width:194px;height:63px;background:linear-gradient(#f2f2f2,#ececec)"></div>
<div class="t" style="left:911px;top:539px;">计件：</div>
<div class="combo" style="left:937.5px;top:536px;width:47.5px;height:15.5px"></div>
<div class="abs" style="left:972px;top:537px;width:12px;height:13.5px;background:linear-gradient(#e2ebfb,#b9cdf3)"></div>
<svg class="abs" style="left:972px;top:537px" width="12" height="14"><path d="M3,5 L6,2 L9,5 M3,9 L6,12 L9,9" fill="none" stroke="#2a3a78" stroke-width="1.3"/></svg>
<div class="t m" style="right:131.5px;top:539.3px;font-size:9.8px;font-weight:normal;color:#000;transform:scaleX(0.79);transform-origin:100% 0">O</div>
<div class="t" style="left:988px;top:539px;">计划数量：</div>
<div class="combo" style="left:1036px;top:536px;width:50px;height:15.5px"><div class="dd"></div></div>
<svg class="abs" style="left:1073px;top:536px" width="13" height="15.5"><path d="M3,6.2 L6.3,9.6 L9.6,6.2" fill="none" stroke="#2a3a78" stroke-width="1.5"/></svg>
<div class="t m" style="right:27.0px;top:539.3px;font-size:9.8px;font-weight:normal;color:#000;transform:scaleX(0.79);transform-origin:100% 0">1OO</div>
<div class="btn " style="left:966px;top:552.5px;width:52px;height:18.0px"></div>
<div class="t" style="left:974px;top:557px;">循环加工</div>
<div class="btn " style="left:1024px;top:552.5px;width:52px;height:18.0px"></div>
<div class="t" style="left:1041px;top:557px;">清零</div>
<div class="abs" style="left:922px;top:575px;width:162px;height:14px;background:#f2f0e4"></div>
<div class="cb" style="left:911px;top:577.5px"></div>
<div class="t" style="left:923px;top:578.5px;">按下外部 “开始” 按钮时启动循环加工</div>
<div id="bottom" class="abs"></div>
<div class="abs" style="left:0;top:597px;width:1100px;height:3px;background:linear-gradient(#e4e3dc,#a8a8a4)"></div>
<div class="abs" style="left:0;top:599.5px;width:410.5px;height:20px;background:#fff;border-left:1.5px solid #9a9a9a;border-top:1.5px solid #9a9a9a;border-right:1.5px solid #b8bcc0"></div>
<div class="abs" style="left:412px;top:599.5px;width:688px;height:20px;background:#fff;border-left:1.5px solid #9aa0a6;border-top:1.5px solid #9a9a9a"></div>
<div class="abs" style="left:1087px;top:602px;width:11px;height:10px;background:linear-gradient(#cfe0f8,#b0c8f0);border:1px solid #c0d0e8"></div>
<div class="abs" style="left:1087px;top:613px;width:11px;height:6px;background:#c8daf4"></div>
<svg class="abs" style="left:1087px;top:602px" width="11" height="10"><path d="M2.5,7 L5.5,4 L8.5,7" fill="none" stroke="#1a2a68" stroke-width="1.6"/></svg>
<div class="abs" style="left:3px;top:613px;width:110px;height:5px;overflow:hidden"><div class="t" style="left:0;top:2.5px;font-weight:bold;color:#000">确定所有图形（所有图形）</div></div>

</body></html>
